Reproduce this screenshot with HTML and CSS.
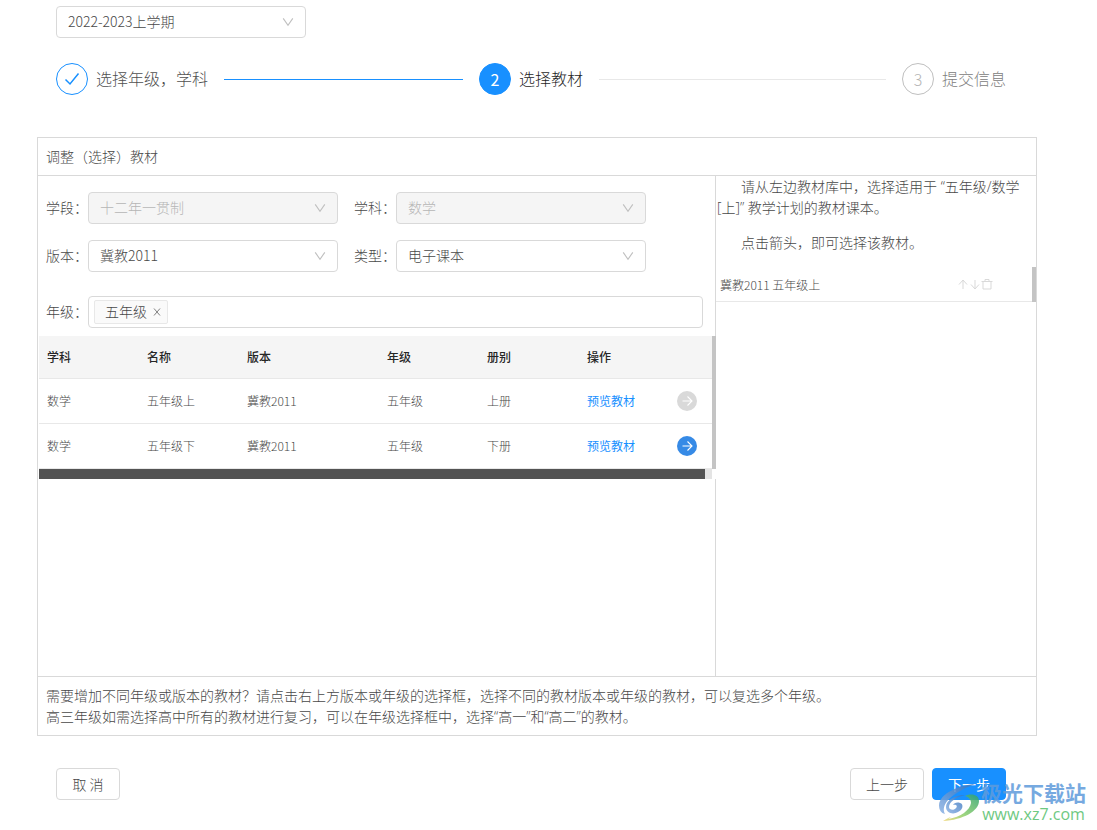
FILE: index.html
```
<!DOCTYPE html>
<html lang="zh-CN">
<head>
<meta charset="utf-8">
<title>选择教材</title>
<link rel="stylesheet" href="styles.css">
</head>
<body>
<svg class="defs" aria-hidden="true">
  <symbol id="chevron" viewBox="0 0 12 12"><path d="M1.200 2.400 6 9.200l4.800-6.800" fill="none" stroke="currentColor" stroke-width="1.100"/></symbol>
  <symbol id="go" viewBox="0 0 20 20"><circle cx="10" cy="10" r="10" fill="currentColor"/><path d="M5.500 10h9.500M10.500 5.500 15 10l-4.500 4.500" fill="none" stroke="#fff" stroke-width="1.100"/></symbol>
</svg>
<div class="page">
  <div class="inset">
    <div class="select">
      <select aria-label="学期"><option>2022-2023上学期</option></select>
      <svg class="chevron"><use href="#chevron"/></svg>
    </div>
    <ol class="steps">
      <li class="step done">
        <span class="dot"><svg viewBox="0 0 16 16" width="16" height="16"><path d="M1.500 8.500 6 13 14.500 2.500" fill="none" stroke="currentColor" stroke-width="1.500"/></svg></span>
        <span class="step-title">选择年级，学科</span>
      </li>
      <li class="step active"><span class="dot">2</span><span class="step-title">选择教材</span></li>
      <li class="step"><span class="dot">3</span><span class="step-title">提交信息</span></li>
    </ol>
  </div>

  <section class="card">
    <h1 class="card-title">调整（选择）教材</h1>
    <div class="card-body">
      <div class="library">
        <div class="filters">
          <div class="filter-row">
            <label for="stage">学段：</label>
            <div class="select disabled"><select id="stage" disabled><option>十二年一贯制</option></select><svg class="chevron"><use href="#chevron"/></svg></div>
            <label class="second" for="subject">学科：</label>
            <div class="select disabled"><select id="subject" disabled><option>数学</option></select><svg class="chevron"><use href="#chevron"/></svg></div>
          </div>
          <div class="filter-row">
            <label for="edition">版本：</label>
            <div class="select"><select id="edition"><option>冀教2011</option></select><svg class="chevron"><use href="#chevron"/></svg></div>
            <label class="second" for="kind">类型：</label>
            <div class="select"><select id="kind"><option>电子课本</option></select><svg class="chevron"><use href="#chevron"/></svg></div>
          </div>
          <div class="filter-row grade-row">
            <label for="grade">年级：</label>
            <div class="tags">
              <span class="tag"><span class="tag-text">五年级</span><button type="button" aria-label="移除"><svg viewBox="0 0 8 8" width="8" height="8"><path d="M1 .5 7 7.500M7 .5 1 7.500" stroke="currentColor" stroke-width="1"/></svg></button></span>
              <input id="grade" type="text">
            </div>
          </div>
        </div>
        <div class="table-wrap">
          <table class="books">
            <colgroup><col class="c-m"><col class="c-m"><col class="c-l"><col class="c-m"><col class="c-m"><col class="c-s"><col></colgroup>
            <thead><tr><th>学科</th><th>名称</th><th>版本</th><th>年级</th><th>册别</th><th colspan="2">操作</th></tr></thead>
            <tbody>
              <tr><td>数学</td><td>五年级上</td><td>冀教2011</td><td>五年级</td><td>上册</td><td><a href="#">预览教材</a></td><td><button class="go off" type="button" aria-label="选择" disabled><svg width="20" height="20"><use href="#go"/></svg></button></td></tr>
              <tr><td>数学</td><td>五年级下</td><td>冀教2011</td><td>五年级</td><td>下册</td><td><a href="#">预览教材</a></td><td><button class="go" type="button" aria-label="选择"><svg width="20" height="20"><use href="#go"/></svg></button></td></tr>
            </tbody>
          </table>
          <div class="v-bar"></div>
          <div class="h-bar"><div class="h-thumb"></div></div>
        </div>
      </div>
      <div class="chosen">
        <p>请从左边教材库中，选择适用于 “五年级/数学[上]” 教学计划的教材课本。</p>
        <p>点击箭头，即可选择该教材。</p>
        <div class="chosen-list">
          <div class="chosen-item">
            <span>冀教2011 五年级上</span>
            <span class="item-actions">
              <button type="button" aria-label="上移"><svg viewBox="0 0 12 12" width="12" height="12"><path d="M6 11V2M2 6.500 6 2l4 4.500" fill="none" stroke="currentColor"/></svg></button>
              <button type="button" aria-label="下移"><svg viewBox="0 0 12 12" width="12" height="12"><path d="M6 2v9M2 6.500 6 11l4-4.500" fill="none" stroke="currentColor"/></svg></button>
              <button type="button" aria-label="删除"><svg viewBox="0 0 12 12" width="12" height="12"><path d="M.5 3.500h11M2 3.500v7.500h8V3.500M4 3.500v-2h4v2" fill="none" stroke="currentColor"/></svg></button>
            </span>
          </div>
          <div class="v-bar"></div>
        </div>
      </div>
    </div>
    <div class="card-note">需要增加不同年级或版本的教材？请点击右上方版本或年级的选择框，选择不同的教材版本或年级的教材，可以复选多个年级。<br>高三年级如需选择高中所有的教材进行复习，可以在年级选择框中，选择“高一”和“高二”的教材。</div>
  </section>

  <div class="inset actions">
    <button class="btn" type="button">取 消</button>
    <div class="right">
      <button class="btn" type="button">上一步</button>
      <button class="btn primary" type="button">下一步</button>
    </div>
  </div>

  <div class="mark">
    <svg class="mark-logo" viewBox="0 0 42 40" width="42" height="40">
      <defs>
        <linearGradient id="mg" x1="1" y1="0" x2="0" y2="1"><stop offset="0" stop-color="#2fa36f"/><stop offset=".6" stop-color="#8ecf6a"/><stop offset="1" stop-color="#f3d774"/></linearGradient>
        <linearGradient id="mb" x1="0" y1="1" x2="1" y2="0"><stop offset="0" stop-color="#8bb2e4"/><stop offset="1" stop-color="#3673bd"/></linearGradient>
      </defs>
      <path d="M37 1C22 2 2 10 1 22c0 5 2 8 6 9-4-8 2-19 30-30Z" fill="url(#mb)"/>
      <path d="M27 12C16 12 8 18 8 24c0 6 7 8 12 5 5-2 6-8 2-9-3-1-6 0-7 2 3-1 5 1 3 3-2 3-7 2-7-1 0-5 7-10 16-12Z" fill="url(#mb)"/>
      <path d="M27 13c7-3 14-1 14 5 0 10-16 19-36 20 3-2 5-3 8-4-1 1-2 1-3 2 13-2 22-9 23-16 0-3-2-6-6-7Z" fill="url(#mg)"/>
    </svg>
    <div class="mark-text"><span class="mark-name">极光下载站</span><span class="mark-url">www.xz7.com</span></div>
  </div>
</div>
</body>
</html>
```

FILE: styles.css
```
* { box-sizing: border-box; }
body {
  margin: 0;
  background: #fff;
  color: #484848;
  font: 300 14px/21px "Noto Sans CJK SC", sans-serif;
}
button, select, input { font: inherit; color: inherit; }
button { padding: 0; border: 0; background: none; }
svg { display: block; }
.defs { position: absolute; width: 0; height: 0; }
.page { position: relative; min-height: 100vh; padding: 6px 60px 30px 37px; }
.inset { padding: 0 31px 0 19px; }

.select { display: grid; width: 250px; height: 32px; align-items: center; }
.select > * { grid-area: 1 / 1; }
.select select {
  appearance: none;
  width: 100%;
  height: 32px;
  padding: 0 30px 2px 11px;
  border: 1px solid #d9d9d9;
  border-radius: 4px;
  background: #fff;
  opacity: 1;
}
.select.disabled select { background: #f5f5f5; color: #b5b5b5; }
.chevron { width: 12px; height: 12px; justify-self: end; margin-right: 12px; color: #bfbfbf; pointer-events: none; }

.steps { display: flex; margin: 25px 0 42px; padding: 0; list-style: none; font-size: 16px; line-height: 30px; }
.step { display: flex; flex: 1; align-items: center; height: 32px; color: #808080; }
.step:last-child { flex: none; }
.step:not(:last-child)::after { content: ""; flex: 1; height: 1px; margin: 0 16px; background: #e8e8e8; }
.step-title { height: 32px; }
.dot {
  display: flex;
  align-items: center;
  justify-content: center;
  width: 32px;
  height: 32px;
  margin-right: 8px;
  border: 1px solid #bfbfbf;
  border-radius: 50%;
  color: #b5b5b5;
}
.done { color: #505050; }
.done .dot { border-color: #1890ff; color: #1890ff; }
.step.done::after { background: #1890ff; }
.active { color: #1f1f1f; }
.active .dot { border-color: #1890ff; background: #1890ff; color: #fff; font-weight: 400; }

.card { border: 1px solid #d9d9d9; }
.card-title { margin: 0; padding: 8px; border-bottom: 1px solid #d9d9d9; font: inherit; }
.card-body { display: grid; grid-template-columns: minmax(0, 1fr) 320px; min-height: 500px; }
.library { padding-left: 1px; border-right: 1px solid #d9d9d9; }
.filters { display: flex; flex-direction: column; gap: 16px; padding: 16px 12px 8px 7px; }
.filter-row { display: flex; align-items: center; }
.filter-row label { width: 42px; flex: none; padding-bottom: 2px; white-space: nowrap; }
.filter-row .second { margin-left: 16px; }
.grade-row { margin-top: 8px; }
.tags { display: flex; flex: 1; align-items: center; min-width: 0; height: 32px; padding: 0 5px; border: 1px solid #d9d9d9; border-radius: 4px; }
.tags input { flex: 1; min-width: 0; border: 0; outline: 0; background: none; }
.tag { display: flex; align-items: center; gap: 6px; height: 24px; padding: 0 6px 0 10px; border: 1px solid #e8e8e8; border-radius: 2px; background: #fafafa; }
.tag-text { padding-bottom: 2px; }
.tag button { color: #808080; }

.table-wrap { position: relative; display: grid; grid-template-columns: minmax(0, 1fr) 4px; margin-right: -1px; background: #fff; }
.books { width: 100%; table-layout: fixed; border-collapse: separate; border-spacing: 0; font-size: 12px; line-height: 18px; }
.c-m { width: 100px; }
.c-l { width: 140px; }
.c-s { width: 90px; }
.books th, .books td { height: 45px; padding: 0 8px; border-bottom: 1px solid #e8e8e8; text-align: left; white-space: nowrap; }
.books th { height: 43px; background: #f5f5f5; color: #262626; font-weight: 500; }
.books a { color: #1890ff; font-weight: 400; text-decoration: none; }
.go { display: block; color: #368ae6; }
.go.off { color: #d9d9d9; }
.v-bar { background: #c4c4c4; }
.h-bar { height: 10px; background: #e4e4e4; }
.h-thumb { width: 99%; height: 10px; background: #535353; }

.chosen { font-family: "Open Sans", "Noto Sans CJK SC", sans-serif; }
.chosen p { margin: 0 0 14px; padding-left: 1px; text-indent: 24px; }
.chosen-list { display: grid; grid-template-columns: minmax(0, 1fr) 4px; font-family: "Noto Sans CJK SC", sans-serif; font-size: 12px; }
.chosen-item { display: flex; align-items: center; justify-content: space-between; height: 35px; padding: 0 39px 0 4px; border-bottom: 1px solid #e8e8e8; }
.item-actions { display: flex; color: #d9d9d9; }
.card-note { padding: 8px; border-top: 1px solid #d9d9d9; font-family: "Open Sans", "Noto Sans CJK SC", sans-serif; }

.actions { display: flex; justify-content: space-between; margin-top: 32px; }
.right { display: flex; gap: 8px; }
.btn { min-width: 64px; height: 32px; padding: 0 15px; border: 1px solid #d9d9d9; border-radius: 4px; background: #fff; }
.btn.primary { border-color: #1890ff; background: #1890ff; color: #fff; font-weight: 400; }

.mark { position: absolute; right: 11px; bottom: 5px; display: flex; align-items: center; opacity: .85; pointer-events: none; }
.mark-logo { margin-right: 1px; }
.mark-text { display: flex; flex-direction: column; align-items: center; font-weight: 700; white-space: nowrap; }
.mark-name { color: #5f9bdb; font-size: 21px; line-height: 22px; }
.mark-url { color: #55c06c; font: 500 16px/22px "Open Sans", sans-serif; }
```
